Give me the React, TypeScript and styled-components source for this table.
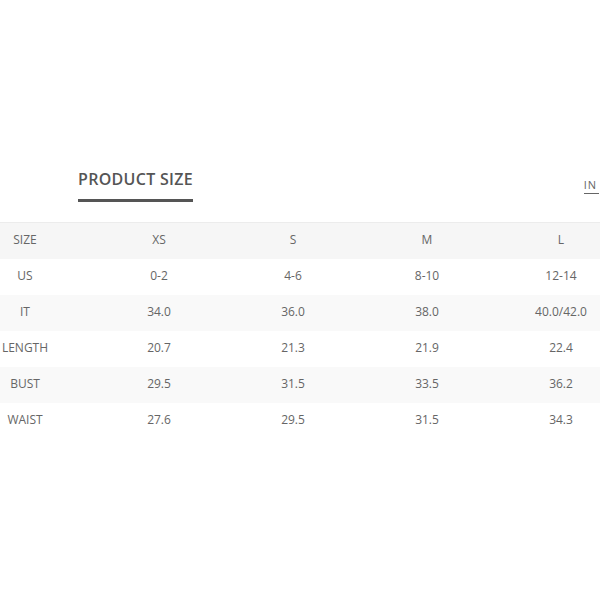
import React from "react";
import styled, { createGlobalStyle } from "styled-components";

const Global = createGlobalStyle`
  html, body { margin: 0; padding: 0; background: #fff; }
  body { overflow: hidden; font-family: "Open Sans", "Liberation Sans", sans-serif; }
`;

const Page = styled.div`
  width: 600px;
  height: 600px;
  overflow: hidden;
  padding-top: 168px;
  box-sizing: border-box;
`;

const TopBar = styled.div`
  display: flex;
  align-items: center;
  justify-content: space-between;
  padding-left: 78px;
  padding-right: 1px;
  margin-bottom: 20px;
`;

const Title = styled.h2`
  margin: 0;
  font-size: 16px;
  line-height: 22px;
  font-weight: 600;
  letter-spacing: 0.3px;
  color: #555;
  padding-bottom: 9px;
  border-bottom: 3px solid #555;
`;

const UnitTab = styled.span<{ $active?: boolean }>`
  font-size: 11px;
  line-height: 16px;
  letter-spacing: 1px;
  color: #666;
  padding: 0 2px 0 0;
  border-bottom: 1.5px solid ${(p) => (p.$active ? "#666" : "transparent")};
`;

const Table = styled.table`
  margin-left: -42px;
  width: 670px;
  table-layout: fixed;
  border-collapse: collapse;
  border-top: 1px solid #ececec;
`;

const Row = styled.tr<{ $shade?: "head" | "stripe" | "none" }>`
  height: 36px;
  background: ${(p) =>
    p.$shade === "head" ? "#f6f6f6" : p.$shade === "stripe" ? "#f9f9f9" : "#fff"};
`;

const Cell = styled.td`
  padding: 0 0 2px 0;
  text-align: center;
  vertical-align: middle;
  font-size: 12px;
  color: #666;
  width: 134px;
`;

const header = ["SIZE", "XS", "S", "M", "L"];
const rows: string[][] = [
  ["US", "0-2", "4-6", "8-10", "12-14"],
  ["IT", "34.0", "36.0", "38.0", "40.0/42.0"],
  ["LENGTH", "20.7", "21.3", "21.9", "22.4"],
  ["BUST", "29.5", "31.5", "33.5", "36.2"],
  ["WAIST", "27.6", "29.5", "31.5", "34.3"],
];

export default function App() {
  return (
    <>
      <Global />
      <Page>
        <TopBar>
          <Title>PRODUCT SIZE</Title>
          <UnitTab $active>IN</UnitTab>
        </TopBar>
        <Table>
          <tbody>
            <Row $shade="head">
              {header.map((h) => (
                <Cell key={h}>{h}</Cell>
              ))}
            </Row>
            {rows.map((r, i) => (
              <Row key={r[0]} $shade={i % 2 === 1 ? "stripe" : "none"}>
                {r.map((c, j) => (
                  <Cell key={j}>{c}</Cell>
                ))}
              </Row>
            ))}
          </tbody>
        </Table>
      </Page>
    </>
  );
}
